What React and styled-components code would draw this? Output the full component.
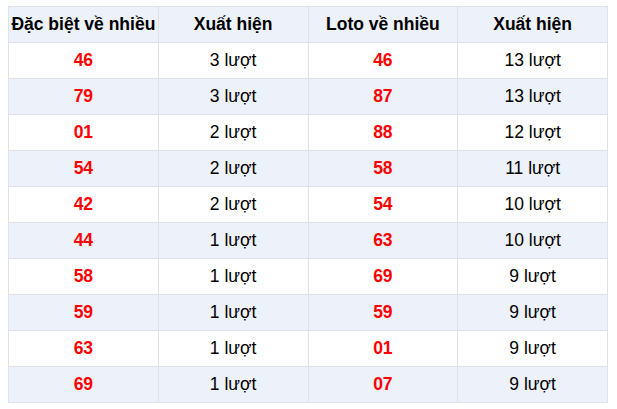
import React from "react";
import styled, { createGlobalStyle } from "styled-components";

const Global = createGlobalStyle`
  html, body { margin: 0; padding: 0; background: #fff; }
  body { padding: 6px 8px; font-family: "Liberation Sans", Arial, sans-serif; }
`;

const Table = styled.table`
  width: 600px;
  border-collapse: collapse;
  table-layout: fixed;
  font-family: "Liberation Sans", Arial, sans-serif;
  font-size: 17.5px;
  color: #000;
`;

const Row = styled.tr`
  height: 36px;
  background: ${(p) => (p.$alt ? "#edf1f9" : "#ffffff")};
`;

const Head = styled.th`
  border: 1px solid #dde1e8;
  font-weight: bold;
  text-align: center;
  padding: 0;
  white-space: nowrap;
  color: #000;
`;

const Cell = styled.td`
  border: 1px solid #dde1e8;
  text-align: center;
  padding: 0;
  color: ${(p) => (p.$num ? "#ff0000" : "#000")};
  font-weight: ${(p) => (p.$num ? "bold" : "normal")};
`;

const data = [
  ["46", "3", "46", "13"],
  ["79", "3", "87", "13"],
  ["01", "2", "88", "12"],
  ["54", "2", "58", "11"],
  ["42", "2", "54", "10"],
  ["44", "1", "63", "10"],
  ["58", "1", "69", "9"],
  ["59", "1", "59", "9"],
  ["63", "1", "01", "9"],
  ["69", "1", "07", "9"],
];

export default function App() {
  return (
    <>
      <Global />
      <Table>
        <thead>
          <Row $alt>
            <Head>Đặc biệt về nhiều</Head>
            <Head>Xuất hiện</Head>
            <Head>Loto về nhiều</Head>
            <Head>Xuất hiện</Head>
          </Row>
        </thead>
        <tbody>
          {data.map((r, i) => (
            <Row key={i} $alt={i % 2 === 1}>
              <Cell $num>{r[0]}</Cell>
              <Cell>{r[1]} lượt</Cell>
              <Cell $num>{r[2]}</Cell>
              <Cell>{r[3]} lượt</Cell>
            </Row>
          ))}
        </tbody>
      </Table>
    </>
  );
}
